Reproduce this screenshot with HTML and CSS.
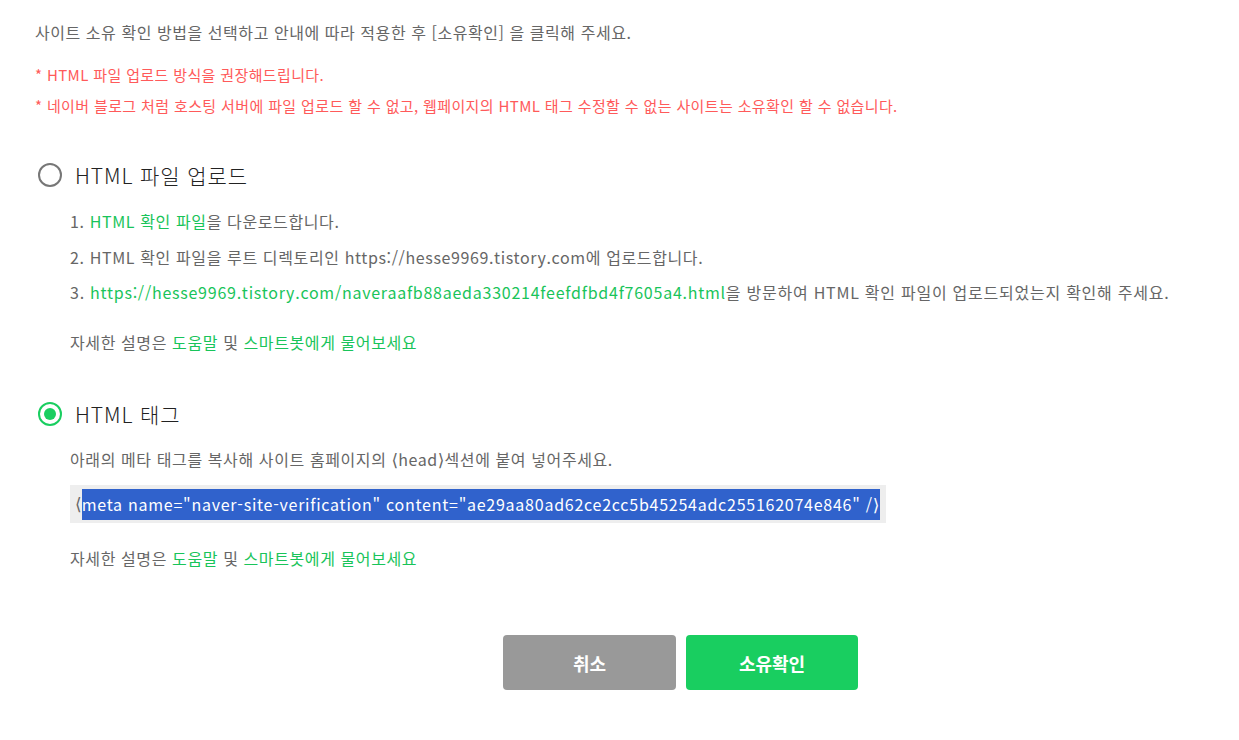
FILE: index.html
```html
<!DOCTYPE html>
<html lang="ko">
<head>
<meta charset="utf-8">
<link rel="stylesheet" href="styles.css">
</head>
<body>
<div class="page">
  <p class="intro">사이트 소유 확인 방법을 선택하고 안내에 따라 적용한 후 [소유확인] 을 클릭해 주세요.</p>
  <div class="notes">
    <p class="note">* HTML 파일 업로드 방식을 권장해드립니다.</p>
    <p class="note">* 네이버 블로그 처럼 호스팅 서버에 파일 업로드 할 수 없고, 웹페이지의 HTML 태그 수정할 수 없는 사이트는 소유확인 할 수 없습니다.</p>
  </div>

  <section class="option">
    <label class="option-head"><span class="radio"></span><span class="option-title">HTML 파일 업로드</span></label>
    <ol class="steps">
      <li>1. <a class="link">HTML 확인 파일</a>을 다운로드합니다.</li>
      <li>2. HTML 확인 파일을 루트 디렉토리인 https://hesse9969.tistory.com에 업로드합니다.</li>
      <li class="long">3. <a class="link">https://hesse9969.tistory.com/naveraafb88aeda330214feefdfbd4f7605a4.html</a>을 방문하여 HTML 확인 파일이 업로드되었는지 확인해 주세요.</li>
    </ol>
    <p class="help">자세한 설명은 <a class="link">도움말</a> 및 <a class="link">스마트봇에게 물어보세요</a></p>
  </section>

  <section class="option option-tag">
    <label class="option-head"><span class="radio checked"></span><span class="option-title">HTML 태그</span></label>
    <p class="desc">아래의 메타 태그를 복사해 사이트 홈페이지의 <span class="ang">⟨</span>head<span class="ang">⟩</span>섹션에 붙여 넣어주세요.</p>
    <div class="code"><span class="ang">⟨</span><span class="sel">meta name="naver-site-verification" content="ae29aa80ad62ce2cc5b45254adc255162074e846" /<span class="ang">⟩</span></span></div>
    <p class="help">자세한 설명은 <a class="link">도움말</a> 및 <a class="link">스마트봇에게 물어보세요</a></p>
  </section>

  <div class="actions">
    <button class="btn btn-cancel">취소</button>
    <button class="btn btn-ok">소유확인</button>
  </div>
</div>
</body>
</html>
```
FILE: styles.css
```css
* { box-sizing: border-box; }
html, body { margin: 0; padding: 0; background: #fff; }
body {
  font-family: "Noto Sans CJK KR", "Noto Sans", sans-serif;
  color: #666;
  font-size: 16px;
}
p { margin: 0; }
.page { padding: 20px 0 0 35px; width: 1239px; }
.intro { font-size: 16px; line-height: 24px; color: #666; letter-spacing: 0.55px; }
.notes { margin-top: 20px; display: flex; flex-direction: column; gap: 9px; }
.note { font-size: 15px; line-height: 22px; color: #ff5a5a; letter-spacing: 0.37px; }

.option { margin-top: 44px; padding-left: 3px; }
.option-tag { margin-top: 46px; }
.option-head { display: flex; align-items: center; gap: 13px; height: 28px; }
.radio {
  width: 24px; height: 24px; border-radius: 50%; flex: none;
  border: 2.5px solid #777; display: flex; align-items: center; justify-content: center;
}
.radio.checked { border-color: #19ce60; }
.radio.checked::after { content: ""; width: 12px; height: 12px; border-radius: 50%; background: #19ce60; }
.option-title { font-size: 21px; color: #222; letter-spacing: 0.9px; font-weight: 300; }

.steps { list-style: none; margin: 20px 0 0 32px; padding: 0; display: flex; flex-direction: column; gap: 11.5px; }
.steps li { font-size: 16px; line-height: 24px; color: #666; letter-spacing: 0.62px; }
.steps li.long { letter-spacing: 0.75px; }
.link { color: #19c45a; text-decoration: none; }
.help { margin: 26px 0 0 32px; font-size: 16px; line-height: 24px; color: #666; letter-spacing: 0.6px; }
.desc { margin: 19px 0 0 32px; font-size: 16px; line-height: 24px; color: #666; letter-spacing: 0.6px; }
.ang { font-family: "DejaVu Sans", sans-serif; font-size: 17px; letter-spacing: 0; }
.code {
  margin: 13px 0 0 32px; width: 816px; height: 38px; background: #eee;
  display: flex; align-items: center; padding-left: 5px;
  font-size: 16px; letter-spacing: 0.75px; color: #666;
}
.sel { background: #3062cc; color: #fff; line-height: 30px; padding-right: 1px; }
.option-tag .help { margin-top: 23px; }

.actions { display: flex; gap: 10px; margin-top: 65px; padding-left: 468px; }
.btn {
  width: 173px; height: 55px; border: 0; border-radius: 4px; color: #fff;
  font-family: inherit; font-size: 18px; font-weight: 700; cursor: pointer;
}
.btn-cancel { background: #999; }
.btn-ok { background: #19ce60; width: 172px; }
```
